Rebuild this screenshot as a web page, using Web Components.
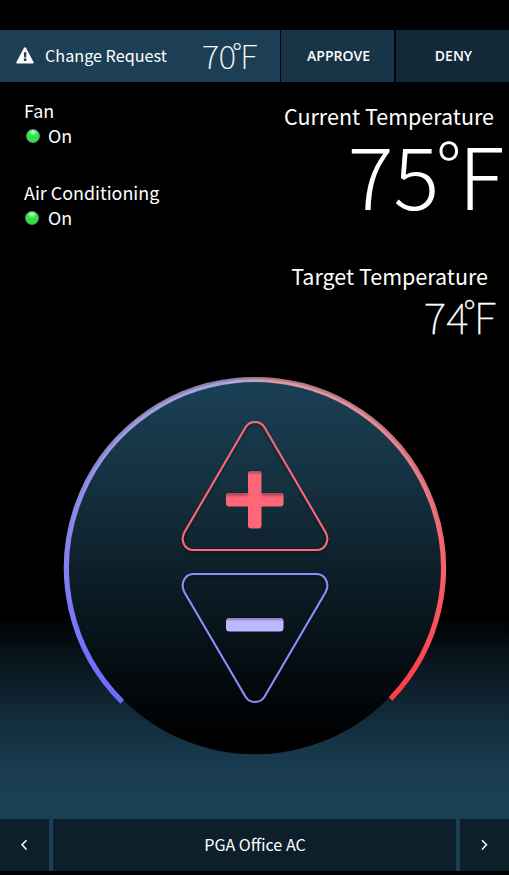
<!DOCTYPE html>
<html lang="en">
<head>
<meta charset="utf-8">
<title>Thermostat</title>
<style>
html,body{margin:0;height:100%;background:#000}
body{font-family:"Noto Sans CJK SC","Noto Sans CJK JP",sans-serif;color:#fff;overflow:hidden}
</style>
</head>
<body>
<thermo-app>
  <request-bar slot="top">
    <span slot="label">Change Request</span>
    <temp-value slot="value" size="tiny">70</temp-value>
    <span slot="yes">APPROVE</span>
    <span slot="no">DENY</span>
  </request-bar>
  <status-item slot="status"><span slot="name">Fan</span>On</status-item>
  <status-item slot="status" class="ac"><span slot="name">Air Conditioning</span>On</status-item>
  <temp-readout slot="temps" size="large"><span slot="name">Current Temperature</span><temp-value size="large">75</temp-value></temp-readout>
  <temp-readout slot="temps" size="small"><span slot="name">Target Temperature</span><temp-value size="small">74</temp-value></temp-readout>
  <temp-dial slot="dial"></temp-dial>
  <room-nav slot="bottom">PGA Office AC</room-nav>
</thermo-app>
<script>
class Base extends HTMLElement{
  constructor(){super();const t=document.createElement('template');t.innerHTML=this.constructor.html;
    this.attachShadow({mode:'open'}).append(t.content.cloneNode(true));}
}
class ThermoApp extends Base{static html=`<style>
:host{display:grid;grid-template-rows:52px 295px 1fr 52px;height:875px;width:509px;box-sizing:border-box;padding:30px 0 4px;
 background:linear-gradient(#000 617px,#061017 650px,#0d1f2a 685px,#132d3c 722px,#193b50 765px,#1a4054 800px,#1a4054 871px,#000 871px)}
.info{display:flex;justify-content:space-between}
.left{display:flex;flex-direction:column;gap:32px;padding:16px 0 0 24px}
.right{display:flex;flex-direction:column;align-items:flex-end}
</style><slot name="top"></slot>
<div class="info"><div class="left"><slot name="status"></slot></div><div class="right"><slot name="temps"></slot></div></div>
<slot name="dial"></slot><slot name="bottom"></slot>`}
customElements.define('thermo-app',ThermoApp);

class TempValue extends Base{static html=`<style>
:host{display:block;font-weight:100;white-space:nowrap}
.d{font-size:.84em;line-height:0;vertical-align:.19em}
:host([size=large]){font-size:85.500px;line-height:90px;font-weight:300}
:host([size=large]) .d{margin:0 -3px 0 -3px}
:host([size=small]){font-size:43px;line-height:50px;-webkit-text-stroke:.3px #fff}
:host([size=small]) .d{margin:0 -2px 0 -5px}
:host([size=tiny]){font-size:33px;line-height:48px;padding-bottom:2px;-webkit-text-stroke:.2px #fff}
:host([size=tiny]) .n{letter-spacing:-.5px}
:host([size=tiny]) .d{margin:0 -1.500px 0 -3px}
</style><span class="n"><slot></slot></span><span class="d">°</span><span>F</span>`}
customElements.define('temp-value',TempValue);

class RequestBar extends Base{static html=`<style>
:host{display:grid;grid-template-columns:279px 113px 113px;gap:2px;height:52px;background:linear-gradient(90deg,#1c3f55 280px,#02090d 280px)}
.msg{display:flex;align-items:center;background:#1c3f55;padding-left:16px}
svg{display:block;margin:0 11px 2px 0;flex:none}
.l{font-size:16.2px;line-height:24px;white-space:nowrap;width:157px;padding-bottom:2px}
.b{display:flex;align-items:center;justify-content:center;background:#173547;font:600 14px/52px "Open Sans",sans-serif;padding-left:2px}
.n{background:#122937}
</style><div class="msg"><svg width="18" height="17" viewBox="0 0 18 17"><path d="M9 0.300Q9.700.300 10.200 1.200L17.500 14.900Q18.200 16.600 16.600 16.600H1.400Q-.2 16.600.5 14.900L7.800 1.200Q8.300.300 9 .300Z" fill="#fff"/><path d="M7.800 5.200h2.700l-.4 5.200H8.200zM7.900 11.600h2.500v2.400H7.900z" fill="#1c3f55"/></svg>
<div class="l"><slot name="label"></slot></div><slot name="value"></slot></div>
<div class="b"><slot name="yes"></slot></div><div class="b n"><slot name="no"></slot></div>`}
customElements.define('request-bar',RequestBar);

class StatusItem extends Base{static html=`<style>
:host{display:block;font-size:17.900px;line-height:25px;white-space:nowrap}
.row{display:flex;align-items:center}
.led{width:14px;height:14px;box-sizing:border-box;border-radius:50%;border:1px solid #6d8f89;margin:0 8px 0 2px;background:radial-gradient(ellipse 5px 4px at 50% 20%,#dfffe4 0,#7bf48a 45%,#2be63e 100%)}
:host(.ac) .led{margin:0 9px 0 1px}
</style><div><slot name="name"></slot></div><div class="row"><i class="led"></i><slot></slot></div>`}
customElements.define('status-item',StatusItem);

class TempReadout extends Base{static html=`<style>
:host{display:block;text-align:right;white-space:nowrap}
.n{font-size:21.500px;line-height:30px}
:host([size=large]){height:160px;padding:19px 5px 0 0;box-sizing:border-box}
:host([size=large]) .n{padding-right:10px;margin-bottom:-3px}
:host([size=small]){padding:19px 13px 0 0}
:host([size=small]) .n{padding-right:8px;margin-bottom:-1px}
</style><div class="n"><slot name="name"></slot></div><slot></slot>`}
customElements.define('temp-readout',TempReadout);

class TempDial extends Base{static html=`<style>:host{display:block;margin-left:64px}svg{display:block;overflow:visible}</style>
<svg width="382" height="378" viewBox="64 377 382 378">
<defs>
<linearGradient id="bg" x2="0" y2="1"><stop offset="0" stop-color="#1a4056"/><stop offset=".28" stop-color="#15303f"/><stop offset=".5" stop-color="#0d202a"/><stop offset=".72" stop-color="#061016"/><stop offset=".95" stop-color="#000"/></linearGradient>
<linearGradient id="l" gradientUnits="userSpaceOnUse" x1="0" y1="377" x2="0" y2="704"><stop offset="0" stop-color="#aba7dc"/><stop offset=".55" stop-color="#8681f1"/><stop offset="1" stop-color="#6c69ff"/></linearGradient>
<linearGradient id="r" gradientUnits="userSpaceOnUse" x1="0" y1="377" x2="0" y2="704"><stop offset="0" stop-color="#dd9aa5"/><stop offset=".55" stop-color="#f4636e"/><stop offset="1" stop-color="#ff3b43"/></linearGradient>
<linearGradient id="t" gradientUnits="userSpaceOnUse" x1="235" y1="0" x2="275" y2="0"><stop offset="0" stop-color="#aba6dc"/><stop offset="1" stop-color="#dd9aa5"/></linearGradient>
<linearGradient id="s" gradientUnits="userSpaceOnUse" x1="0" y1="377" x2="0" y2="560"><stop offset="0" stop-opacity=".2"/><stop offset="1" stop-opacity="0"/></linearGradient>
<filter id="sh" x="-20%" y="-20%" width="140%" height="150%"><feDropShadow dx="0" dy="2" stdDeviation="1.5" flood-opacity=".45"/></filter>
<filter id="bl"><feGaussianBlur stdDeviation="1"/></filter>
<clipPath id="pc"><path d="M251 471h7.500q3 0 3 3v19h19q3 0 3 3v7.500q0 3-3 3h-19v19q0 3-3 3h-7.500q-3 0-3-3v-19h-19q-3 0-3-3v-7.500q0-3 3-3h19v-19q0-3 3-3z"/></clipPath>
<clipPath id="mc"><rect x="226" y="618" width="57.500" height="13.500" rx="3.500"/></clipPath>
</defs>
<circle cx="255" cy="568" r="186.300" fill="url(#bg)"/>
<g fill="none" stroke-width="5.200">
<path d="M122.200 701.800A188.500 188.500 0 0 1 235 380.560" stroke="url(#l)"/>
<path d="M275 380.560A188.500 188.500 0 0 1 390.500 699" stroke="url(#r)"/>
<path d="M234.800 380.590A188.500 188.500 0 0 1 275.200 380.590" stroke="url(#t)"/>
<path d="M65 568A190 190 0 0 1 445 568" stroke="url(#s)" stroke-width="2.500"/>
</g>
<g fill="none" stroke-width="2" filter="url(#sh)">
<path stroke="#ff6678" d="M245.700 427Q249 422 255 422Q261 422 264.300 427L325.700 532.500C330 541 325 550 316.500 550H193.500C185 550 180 541 184.300 532.500Z"/>
<path stroke="#918dff" d="M245.700 697Q249 702 255 702Q261 702 264.300 697L325.700 592C330 583.500 325 574 316.500 574H193.500C185 574 180 583.500 184.300 592Z"/>
</g>
<g clip-path="url(#pc)"><rect x="225" y="470" width="60" height="60" fill="#ff6678"/><path fill="#b84a5c" filter="url(#bl)" d="M246 468h18v5.500h-18zM224 490h24v6h-24zM261.500 490h24v6h-24z"/></g>
<g clip-path="url(#mc)"><rect x="225" y="617" width="60" height="16" fill="#bdb8ff"/><path d="M222 615h65v5h-65z" fill="#8680b0" filter="url(#bl)"/></g>
</svg>`}
customElements.define('temp-dial',TempDial);

class RoomNav extends Base{static html=`<style>
:host{display:grid;grid-template-columns:49px 1fr 49px;gap:4px;background:#1a4056;height:52px}
div{background:#0d1f2a;display:flex;align-items:center;justify-content:center;font-size:16.100px;line-height:50px;box-sizing:border-box}
.t{padding:0 0 2px 1px}
svg{fill:none;stroke:#fff;stroke-width:1.500}
</style><div><svg width="11" height="12"><path d="M7.500 1.200 3 5.800l4.500 4.600"/></svg></div><div class="t"><slot></slot></div><div><svg width="11" height="12"><path d="M3 1.200 7.500 5.800 3 10.400"/></svg></div>`}
customElements.define('room-nav',RoomNav);
</script>
</body>
</html>
